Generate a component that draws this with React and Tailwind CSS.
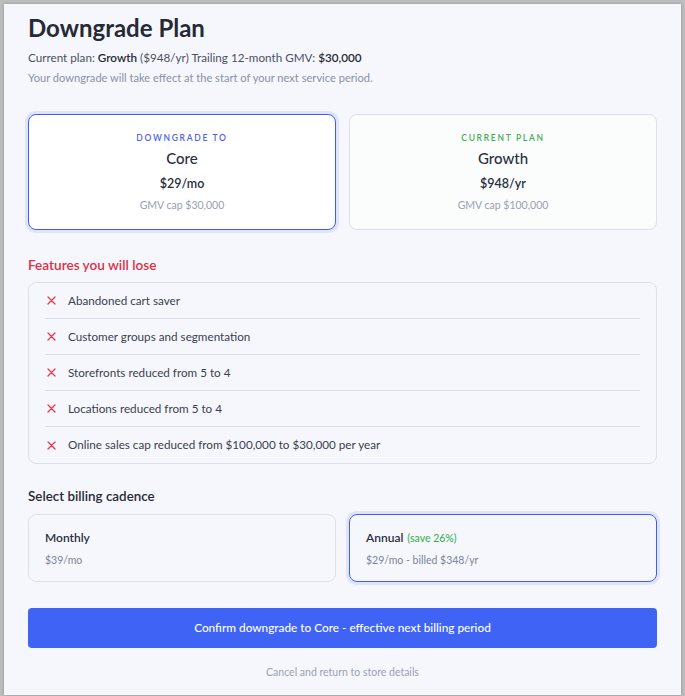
const lostFeatures = [
  'Abandoned cart saver',
  'Customer groups and segmentation',
  'Storefronts reduced from 5 to 4',
  'Locations reduced from 5 to 4',
  'Online sales cap reduced from $100,000 to $30,000 per year',
];

function CrossIcon() {
  return (
    <svg width="9" height="9" viewBox="0 0 9 9" className="ml-[2px] shrink-0">
      <path d="M1 1 L8 8 M8 1 L1 8" stroke="#e23a50" strokeWidth="1.3" strokeLinecap="round" fill="none" />
    </svg>
  );
}

function PlanCard({ label, name, price, cap, active }) {
  return (
    <div
      className={
        active
          ? 'flex flex-col items-center rounded-lg border border-[#3f5ff0] bg-white pt-[17px] pb-[17px] shadow-[0_0_0_3px_#dfe4fb]'
          : 'flex flex-col items-center rounded-lg border border-[#dcdfea] bg-[#fbfdfd] pt-[17px] pb-[17px]'
      }
    >
      <div
        className={
          active
            ? 'text-[8.5px] leading-[12px] font-semibold uppercase tracking-[0.2em] text-[#4d63ea]'
            : 'text-[8.5px] leading-[12px] font-semibold uppercase tracking-[0.2em] text-[#3fae55]'
        }
      >
        {label}
      </div>
      <div className="mt-[4px] text-[15px] leading-[20px] font-medium text-[#2a2f3d]">{name}</div>
      <div className="mt-[7px] text-[12.5px] leading-[18px] font-semibold text-[#2a2f3d]">{price}</div>
      <div className="mt-[5px] text-[10.5px] leading-[14px] text-[#9aa0b3]">{cap}</div>
    </div>
  );
}

function CadenceCard({ title, note, sub, active }) {
  return (
    <div
      className={
        active
          ? 'flex h-[68px] flex-col justify-center rounded-lg border border-[#3f5ff0] px-4 shadow-[0_0_0_3px_#dfe4fb]'
          : 'flex h-[68px] flex-col justify-center rounded-lg border border-[#dcdfec] px-4'
      }
    >
      <div className="text-[12px] leading-[16px] font-semibold text-[#2a2f3d]">
        {title}
        {note && <span className="ml-1 text-[10.5px] font-medium text-[#3fae55]">{note}</span>}
      </div>
      <div className="mt-[7px] text-[10.5px] leading-[14px] text-[#7d8398]">{sub}</div>
    </div>
  );
}

export default function App() {
  return (
    <div className="min-h-screen bg-[#bdbdbf] p-[4px] font-['Lato',sans-serif]">
      <div className="min-h-[688px] bg-[#f6f7fc] px-6 pt-[8px] pb-[16px] shadow-[0_0_3px_rgba(0,0,0,0.25)]">
        <h1 className="text-[24px] leading-[32px] font-bold text-[#262a36]">Downgrade Plan</h1>
        <p className="mt-[4px] text-[11.7px] leading-[18px] text-[#4b5063]">
          Current plan: <span className="font-semibold text-[#262a36]">Growth</span> ($948/yr) Trailing 12-month GMV:{' '}
          <span className="font-semibold text-[#262a36]">$30,000</span>
        </p>
        <p className="mt-[4px] text-[11.1px] leading-[16px] text-[#8a90a6]">
          Your downgrade will take effect at the start of your next service period.
        </p>

        <div className="mt-[28px] grid grid-cols-2 gap-[13px]">
          <PlanCard label="Downgrade to" name="Core" price="$29/mo" cap="GMV cap $30,000" active />
          <PlanCard label="Current plan" name="Growth" price="$948/yr" cap="GMV cap $100,000" />
        </div>

        <h2 className="mt-[25px] text-[13.6px] leading-[20px] font-semibold text-[#dc3045]">Features you will lose</h2>
        <ul className="mt-[7px] rounded-lg border border-[#dcdfea] px-4">
          {lostFeatures.map((f, i) => (
            <li
              key={f}
              className={
                i < lostFeatures.length - 1
                  ? 'flex h-[36px] items-center gap-[12px] border-b border-[#dcdfea] text-[11.7px] text-[#3a3f50]'
                  : 'flex h-[36px] items-center gap-[12px] text-[11.7px] text-[#3a3f50]'
              }
            >
              <CrossIcon />
              {f}
            </li>
          ))}
        </ul>

        <h2 className="mt-[23px] text-[13.4px] leading-[18px] font-semibold text-[#262a36]">Select billing cadence</h2>
        <div className="mt-[9px] grid grid-cols-2 gap-[13px]">
          <CadenceCard title="Monthly" sub="$39/mo" />
          <CadenceCard title="Annual" note="(save 26%)" sub="$29/mo - billed $348/yr" active />
        </div>

        <button className="mt-[26px] h-[40px] w-full rounded-[4px] bg-[#3e63f5] text-[11.8px] font-medium text-white">
          Confirm downgrade to Core - effective next billing period
        </button>
        <div className="mt-[17px] text-center text-[10.5px] leading-[14px] text-[#9aa0b4]">
          Cancel and return to store details
        </div>
      </div>
    </div>
  );
}
